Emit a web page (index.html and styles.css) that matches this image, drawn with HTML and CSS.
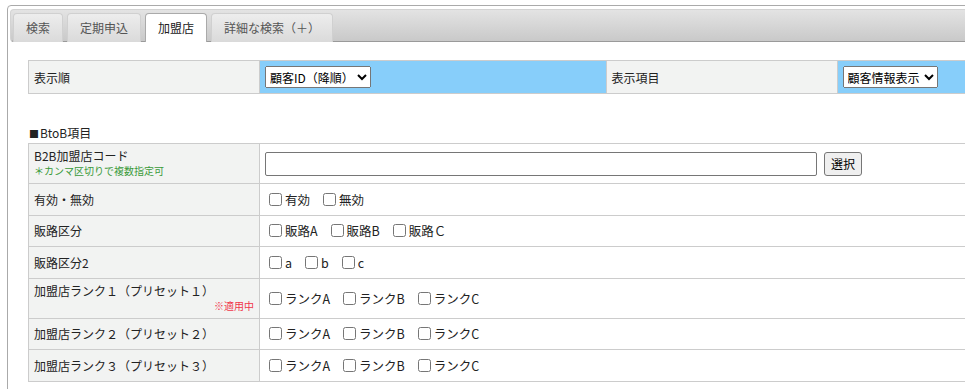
FILE: index.html
```html
<!DOCTYPE html>
<html lang="ja">
<head>
  <meta charset="UTF-8">
  <meta name="viewport" content="width=device-width, initial-scale=1.0">
  <title>加盟店検索</title>
  <link rel="stylesheet" href="styles.css">
</head>
<body>

<div class="tabs">
  <ul class="tab-nav">
    <li><a href="#">検索</a></li>
    <li><a href="#">定期申込</a></li>
    <li class="active"><a href="#">加盟店</a></li>
    <li><a href="#">詳細な検索（＋）</a></li>
  </ul>

  <div class="panel">
    <table class="sort-table">
      <tr>
        <th>表示順</th>
        <td>
          <select>
            <option>顧客ID（降順）</option>
            <option>顧客ID（昇順）</option>
          </select>
        </td>
        <th>表示項目</th>
        <td>
          <select>
            <option>顧客情報表示</option>
          </select>
        </td>
      </tr>
    </table>

    <p class="section-title"><span class="square">■</span>BtoB項目</p>

    <table class="form-table">
      <tr class="tall">
        <th>
          <span class="label">B2B加盟店コード</span>
          <span class="note">＊カンマ区切りで複数指定可</span>
        </th>
        <td>
          <div class="code-row">
            <input type="text" class="code-input">
            <button type="button" class="select-btn">選択</button>
          </div>
        </td>
      </tr>
      <tr>
        <th>有効・無効</th>
        <td>
          <div class="opts">
            <label class="opt"><input type="checkbox">有効</label>
            <label class="opt"><input type="checkbox">無効</label>
          </div>
        </td>
      </tr>
      <tr>
        <th>販路区分</th>
        <td>
          <div class="opts">
            <label class="opt"><input type="checkbox">販路A</label>
            <label class="opt"><input type="checkbox">販路B</label>
            <label class="opt"><input type="checkbox">販路Ｃ</label>
          </div>
        </td>
      </tr>
      <tr>
        <th>販路区分2</th>
        <td>
          <div class="opts">
            <label class="opt"><input type="checkbox">a</label>
            <label class="opt"><input type="checkbox">b</label>
            <label class="opt"><input type="checkbox">c</label>
          </div>
        </td>
      </tr>
      <tr class="tall">
        <th>
          <span class="label">加盟店ランク１（プリセット１）</span>
          <span class="applied">※適用中</span>
        </th>
        <td>
          <div class="opts">
            <label class="opt"><input type="checkbox">ランクA</label>
            <label class="opt"><input type="checkbox">ランクB</label>
            <label class="opt"><input type="checkbox">ランクC</label>
          </div>
        </td>
      </tr>
      <tr>
        <th>加盟店ランク２（プリセット２）</th>
        <td>
          <div class="opts">
            <label class="opt"><input type="checkbox">ランクA</label>
            <label class="opt"><input type="checkbox">ランクB</label>
            <label class="opt"><input type="checkbox">ランクC</label>
          </div>
        </td>
      </tr>
      <tr>
        <th>加盟店ランク３（プリセット３）</th>
        <td>
          <div class="opts">
            <label class="opt"><input type="checkbox">ランクA</label>
            <label class="opt"><input type="checkbox">ランクB</label>
            <label class="opt"><input type="checkbox">ランクC</label>
          </div>
        </td>
      </tr>
    </table>
  </div>
</div>

</body>
</html>
```

FILE: styles.css
```css
html, body {
  overflow: hidden;
}
body {
  margin: 5px 0 0 7px;
  font-family: "Noto Sans CJK JP", "Noto Sans", sans-serif;
  font-size: 12px;
  color: #222;
  background: #fff;
}

/* tab container */
.tabs {
  width: 1210px;
  min-height: 600px;
  padding: 3px 2px;
  border: 1px solid #aaa;
  border-radius: 4px 0 0 0;
}
.tab-nav {
  display: flex;
  gap: 4px;
  margin: 0;
  padding: 3px 2px 0;
  list-style: none;
  border: 1px solid #d3d3d3;
  border-bottom-color: #9a9a9a;
  border-radius: 4px;
  background: linear-gradient(#e3e3e3, #c9c9c9);
}
.tab-nav li {
  margin-bottom: -1px;
  border: 1px solid #d0d0d0;
  border-bottom: none;
  border-radius: 4px 4px 0 0;
  background: linear-gradient(#ededed, #dadada);
}
.tab-nav li a {
  display: block;
  padding: 5px 12px 6px;
  line-height: 17px;
  color: #555;
  text-decoration: none;
}
.tab-nav li.active {
  border-color: #aaa;
  background: #fff;
}
.tab-nav li.active a {
  color: #212121;
}

.panel {
  padding: 18px 0 0 18px;
}

/* tables */
table {
  width: 1156px;
  border-collapse: collapse;
}
th, td {
  height: 20.5px;
  padding: 5px;
  border: 1px solid #ccc;
  text-align: left;
  font-weight: normal;
  vertical-align: middle;
}
th {
  width: 20%;
  padding-left: 5px;
  background: #f2f3f2;
}
.sort-table th,
.sort-table td {
  height: 21px;
}
.sort-table td {
  width: 30%;
  background: #87cefa;
}
select {
  height: 22px;
  font-family: inherit;
  font-size: 12px;
  color: #000;
}

.section-title {
  margin: 30px 0 0 1px;
  line-height: 18px;
}
.square {
  font-size: 10px;
  margin-right: 1px;
}

.form-table .tall th {
  padding-top: 4px;
  padding-bottom: 5px;
}
.form-table th .label {
  display: block;
  line-height: 16px;
}
.note {
  display: block;
  font-size: 10px;
  line-height: 14px;
  color: #3a9a3a;
}
.applied {
  display: block;
  font-size: 10px;
  line-height: 14px;
  color: #f0364a;
  text-align: right;
}

.code-row {
  display: flex;
  align-items: center;
  gap: 7px;
}
.code-input {
  width: 552px;
  height: 24px;
  box-sizing: border-box;
  margin: 0;
  border: 1px solid #767676;
  border-radius: 2px;
}
.select-btn {
  height: 24px;
  padding: 0 6px;
  font-family: inherit;
  font-size: 12px;
  color: #000;
  background: #efefef;
  border: 1px solid #767676;
  border-radius: 3px;
}

.opts {
  display: flex;
  align-items: center;
  gap: 9px;
}
.opt {
  display: inline-flex;
  align-items: center;
  font-size: 12.5px;
}
.opt input {
  margin: 0 3px 0 4px;
}
```
